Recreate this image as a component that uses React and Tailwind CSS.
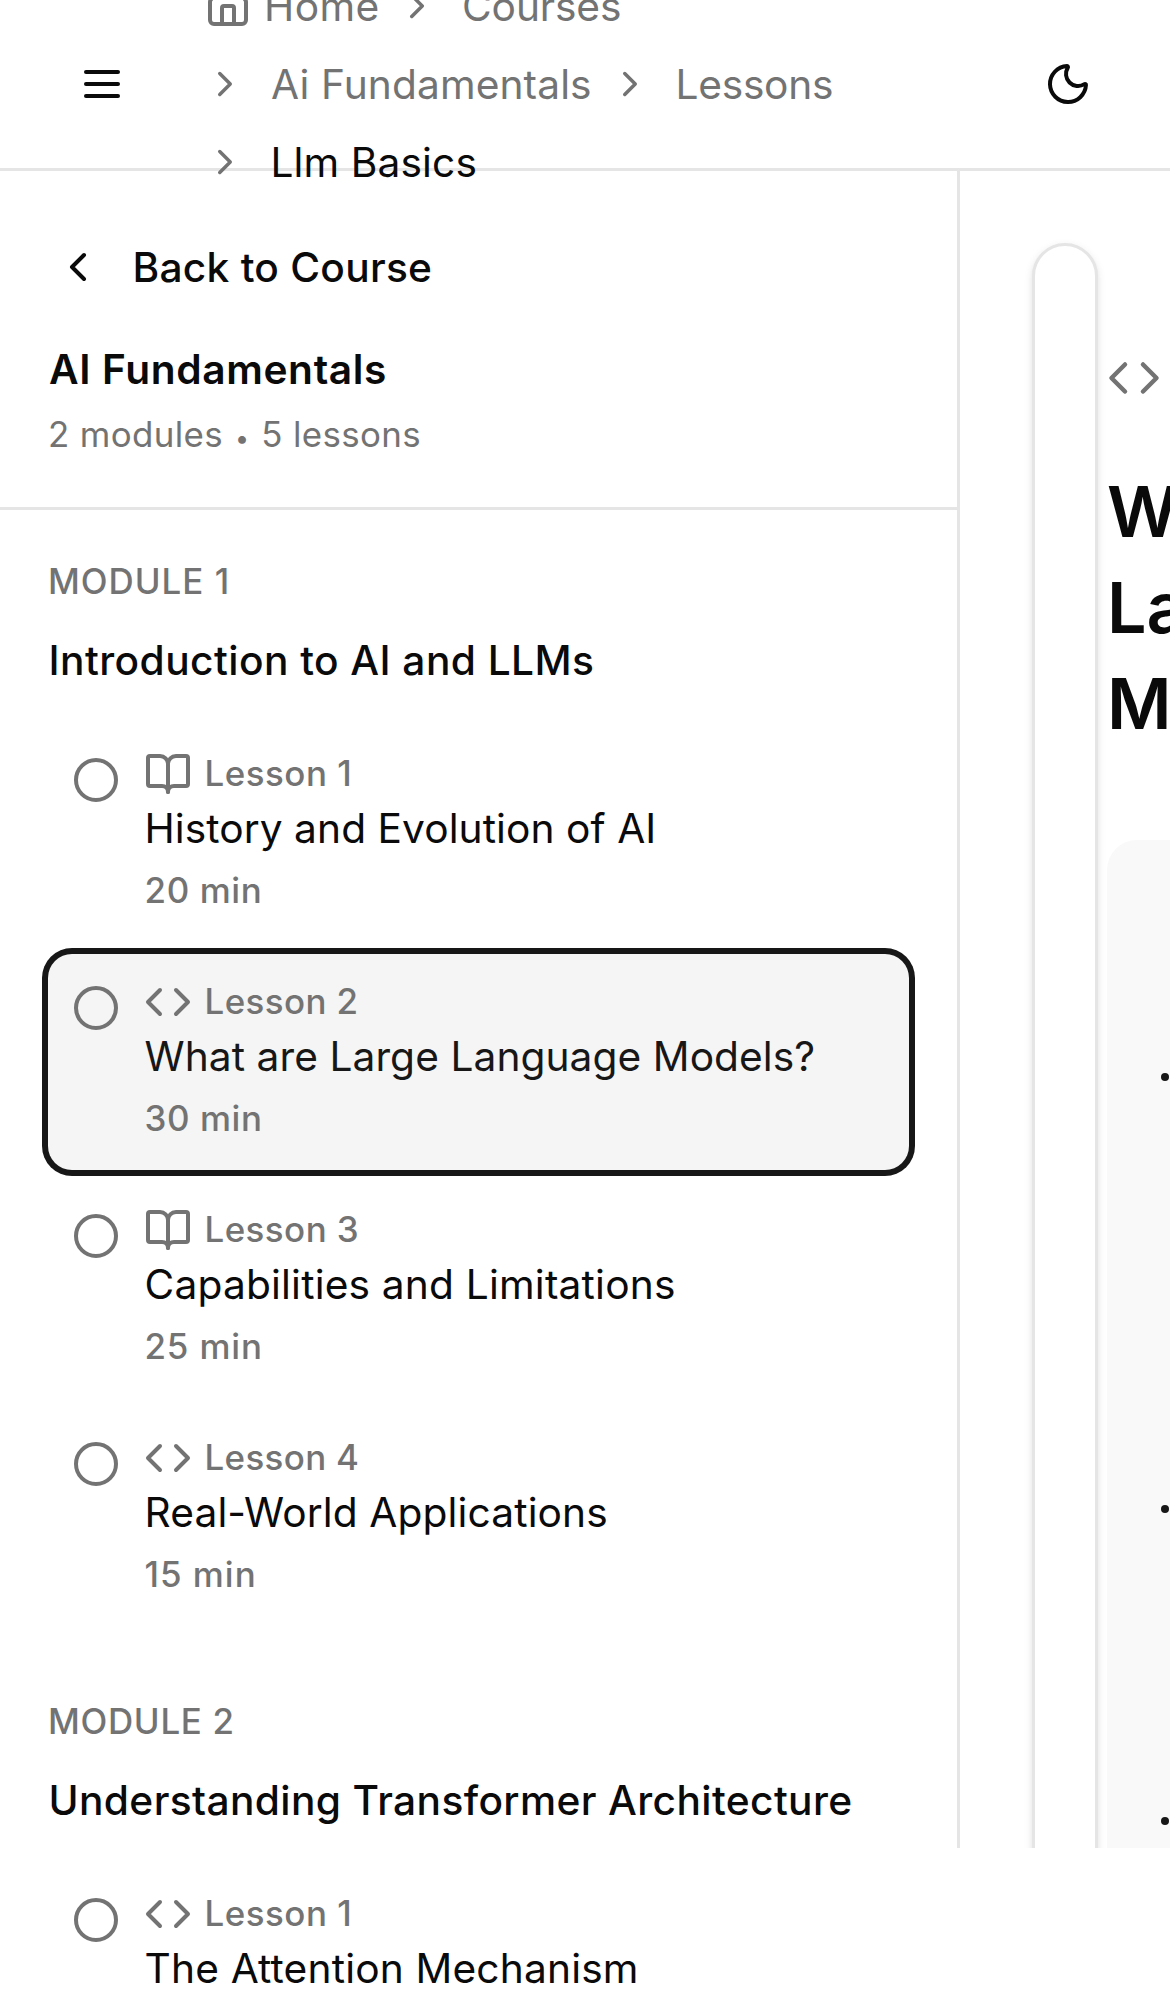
const modules = [
  {
    label: "MODULE 1",
    labelTracking: "tracking-[1px]",
    title: "Introduction to AI and LLMs",
    titleTracking: "tracking-[0.43px]",
    lessons: [
      { n: "Lesson 1", nt: "tracking-[0.5px]", icon: "book", title: "History and Evolution of AI", tt: "tracking-[0.06px]", time: "20 min", mt: "tracking-[0.64px]" },
      { n: "Lesson 2", nt: "tracking-[0.4px]", icon: "code", title: "What are Large Language Models?", tt: "tracking-[0.06px]", time: "30 min", mt: "tracking-[0.6px]", active: true },
      { n: "Lesson 3", nt: "tracking-[0.45px]", icon: "book", title: "Capabilities and Limitations", tt: "tracking-[0.18px]", time: "25 min", mt: "tracking-[0.85px]" },
      { n: "Lesson 4", nt: "tracking-[0.35px]", icon: "code", title: "Real-World Applications", tt: "tracking-[0.11px]", time: "15 min", mt: "tracking-[1px]" },
    ],
  },
  {
    label: "MODULE 2",
    labelTracking: "tracking-[0.7px]",
    title: "Understanding Transformer Architecture",
    titleTracking: "tracking-[0.37px]",
    lessons: [
      { n: "Lesson 1", nt: "tracking-[0.5px]", icon: "code", title: "The Attention Mechanism", tt: "tracking-[0.16px]", time: "35 min", mt: "tracking-[0.6px]" },
    ],
  },
];

function Icon({ className, children }) {
  return (
    <svg
      viewBox="0 0 24 24"
      fill="none"
      stroke="currentColor"
      strokeWidth="2"
      strokeLinecap="round"
      strokeLinejoin="round"
      className={`shrink-0 ${className}`}
    >
      {children}
    </svg>
  );
}

const Code = ({ className }) => (
  <Icon className={className}>
    <path d="m16 18 6-6-6-6" />
    <path d="m8 6-6 6 6 6" />
  </Icon>
);

const Book = ({ className }) => (
  <Icon className={className}>
    <path d="M12 7v14" />
    <path d="M3 18a1 1 0 0 1-1-1V4a1 1 0 0 1 1-1h5a4 4 0 0 1 4 4 4 4 0 0 1 4-4h5a1 1 0 0 1 1 1v13a1 1 0 0 1-1 1h-6a3 3 0 0 0-3 3 3 3 0 0 0-3-3z" />
  </Icon>
);

const Separator = () => (
  <Icon className="size-[42px]">
    <path d="m9 18 6-6-6-6" />
  </Icon>
);

function Header() {
  return (
    <header className="relative z-10 flex h-[171px] shrink-0 items-center border-b-[3px] border-[#e5e5e5]">
      <button className="ml-[78px] block">
        <Icon className="size-12 text-[#0a0a0a]">
          <path d="M4 6h16" />
          <path d="M4 12h16" />
          <path d="M4 18h16" />
        </Icon>
      </button>
      <nav className="ml-[78px] flex w-[700px] flex-col gap-[18px] text-[40.7px] leading-[60px] whitespace-nowrap text-[#737373]">
        <div className="flex h-[60px] items-center">
          <Icon className="size-12">
            <path d="M15 21v-8a1 1 0 0 0-1-1h-4a1 1 0 0 0-1 1v8" />
            <path d="M3 10a2 2 0 0 1 .709-1.528l7-5.999a2 2 0 0 1 2.582 0l7 5.999A2 2 0 0 1 21 10v9a2 2 0 0 1-2 2H5a2 2 0 0 1-2-2z" />
          </Icon>
          <span className="ml-[12px] w-[132px] pt-0.5 tracking-[0.4px]">Home</span>
          <Separator />
          <span className="ml-6 pt-0.5 tracking-[-0.12px]">Courses</span>
        </div>
        <div className="flex h-[60px] items-center">
          <Separator />
          <span className="ml-[25px] w-[338px] pt-0.5 tracking-[0.1px]">Ai Fundamentals</span>
          <Separator />
          <span className="ml-[24.5px] pt-0.5 tracking-[-0.27px]">Lessons</span>
        </div>
        <div className="flex h-[60px] items-center">
          <Separator />
          <span className="ml-[24.5px] pt-0.5 tracking-[0.1px] text-[#0a0a0a]">Llm Basics</span>
        </div>
      </nav>
      <button className="mr-[78px] ml-auto block">
        <Icon className="size-12 text-[#0a0a0a]">
          <path d="M20.985 12.486a9 9 0 1 1-9.473-9.472c.405-.022.617.46.402.803a6 6 0 0 0 8.268 8.268c.344-.215.825-.004.803.401" />
        </Icon>
      </button>
    </header>
  );
}

function Lesson({ lesson }) {
  const LessonIcon = lesson.icon === "book" ? Book : Code;
  return (
    <a
      className={`flex h-[216px] items-start gap-6 rounded-[24px] p-6 ${
        lesson.active ? "bg-[#f5f5f5] text-[#171717] ring-[6px] ring-[#171717]" : "text-[#0a0a0a]"
      }`}
    >
      <Icon className="mt-[6px] size-12 text-[#737373]">
        <circle cx="12" cy="12" r="10" />
      </Icon>
      <div className="whitespace-nowrap">
        <div className="flex h-12 items-center text-[#737373]">
          <LessonIcon className="size-12" />
          <span className={`mb-0.5 ml-[12.5px] text-[34.9px] leading-[46px] font-medium ${lesson.nt}`}>{lesson.n}</span>
        </div>
        <div className={`-mb-0.5 pl-[0.5px] text-[40.7px] leading-[62px] ${lesson.tt}`}>{lesson.title}</div>
        <div className={`mt-2 pl-[0.5px] text-[34.9px] leading-[48px] font-medium text-[#737373] ${lesson.mt}`}>{lesson.time}</div>
      </div>
    </a>
  );
}

function Sidebar() {
  return (
    <aside className="h-full w-[960px] shrink-0 border-r-[3px] border-[#e5e5e5] whitespace-nowrap text-[#0a0a0a]">
      <div className="border-b-[3px] border-[#e5e5e5] p-12">
        <a className="flex h-24 items-center gap-[30.5px] pl-1.5">
          <Icon className="size-12">
            <path d="m15 18-6-6 6-6" />
          </Icon>
          <span className="pt-0.5 text-[40.7px] leading-[60px] font-medium tracking-[0.25px]">Back to Course</span>
        </a>
        <h2 className="mt-6 -mb-0.5 pl-px text-[40.7px] leading-[62px] font-semibold tracking-[0.62px]">AI Fundamentals</h2>
        <p className="mt-3 mb-0.5 text-[34.9px] leading-[46px] tracking-[0.35px] text-[#737373]">
          2 modules <span className="inline-block w-[18px] pb-[5px] text-center text-[25px] leading-none">•</span> 5 lessons
        </p>
      </div>
      <div className="flex flex-col gap-[72px] p-12">
        {modules.map((m) => (
          <section key={m.label}>
            <div className={`text-[34.9px] leading-[46px] font-medium text-[#737373] ${m.labelTracking}`}>{m.label}</div>
            <h3 className={`mt-[26px] pl-[0.5px] text-[40.7px] leading-[62px] font-medium ${m.titleTracking}`}>{m.title}</h3>
            <div className="mt-[34px] flex flex-col gap-3">
              {m.lessons.map((l) => (
                <Lesson key={l.n} lesson={l} />
              ))}
            </div>
          </section>
        ))}
      </div>
    </aside>
  );
}

function LessonCard() {
  return (
    <main className="h-full flex-1 overflow-hidden pt-[72px] pl-[72px]">
      <div className="h-[3000px] w-[66px] rounded-[42px] border-[3px] border-[#e5e5e5] bg-white shadow-[0_3px_9px_0_rgba(0,0,0,0.1),0_3px_6px_-3px_rgba(0,0,0,0.1)]">
        <div className="ml-[72px] w-[600px] pt-[105px]">
          <Code className="size-[54px] text-[#737373]" />
          <h1 className="mt-[59px] text-[70px] leading-[96px] font-semibold whitespace-nowrap text-[#0a0a0a]">
            What are
            <br />
            Large Language
            <br />
            Models?
          </h1>
          <div className="mt-[88px] h-[2400px] rounded-[30px] bg-[#f9f9f9] pt-[233px] pl-[54px] text-[#171717]">
            <div className="h-[432px]">
              <div className="size-[8.4px] rounded-full bg-current" />
            </div>
            <div className="h-[312px]">
              <div className="size-[8.4px] rounded-full bg-current" />
            </div>
            <div className="size-[8.4px] rounded-full bg-current" />
          </div>
        </div>
      </div>
    </main>
  );
}

export default function App() {
  return (
    <div className="flex h-[1992px] w-[1170px] flex-col overflow-hidden bg-white font-[Inter,sans-serif]">
      <Header />
      <div className="flex h-[1677px] shrink-0">
        <Sidebar />
        <LessonCard />
      </div>
    </div>
  );
}
